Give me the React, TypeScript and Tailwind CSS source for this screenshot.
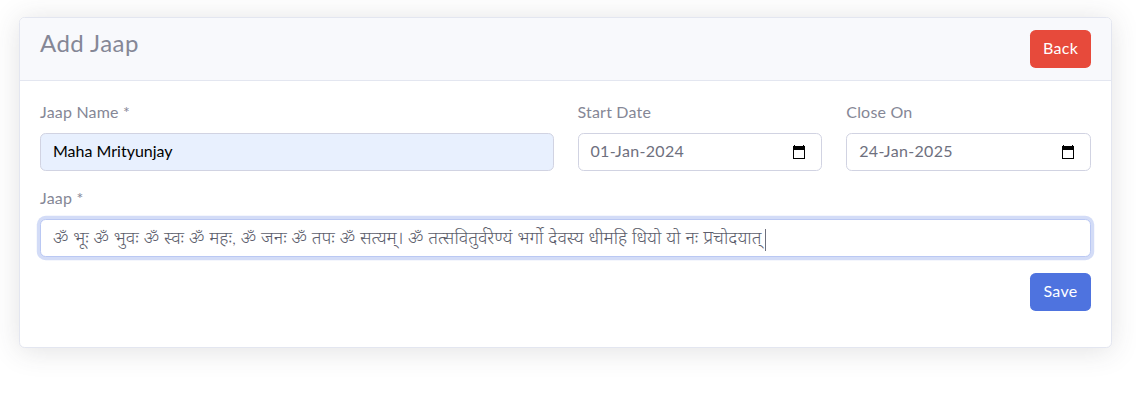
import type { ReactNode } from "react";

function CalendarIcon() {
  return (
    <svg width="14" height="15" viewBox="0 0 14 15" aria-hidden="true" shapeRendering="crispEdges">
      <path d="M2 0h1v1h8V0h1v1h1v13H1V1h1zM2 5v8h10V5z" fill="#000" fillRule="evenodd" />
    </svg>
  );
}

function Field({ label, className, children }: { label: string; className: string; children: ReactNode }) {
  return (
    <div className={className}>
      <div className="mb-2 h-6 text-[16px] leading-[22px] tracking-[0.2px] text-[#858796]">{label}</div>
      {children}
    </div>
  );
}

function DateField({ label, value }: { label: string; value: string }) {
  return (
    <Field label={label} className="w-[244.75px]">
      <div className="flex h-[38px] items-center justify-between rounded-[5.6px] border border-[#d1d3e2] bg-white pr-[15px] pl-3 text-[#6e707e]">
        <span className="pb-0.5 tracking-[0.33px]">{value}</span>
        <CalendarIcon />
      </div>
    </Field>
  );
}

export default function App() {
  return (
    <main className="h-[415px] overflow-hidden bg-white px-[19px] pt-[17px] font-['Lato','Noto_Sans',sans-serif] text-[16px] leading-6">
      <section className="h-[331px] w-[1093px] rounded-[5.6px] border border-[#e3e6f0] bg-white shadow-[0_2.4px_28px_0_rgba(58,59,69,0.15)]">
        <header className="flex h-[63px] items-start justify-between rounded-t-[4.6px] border-b border-[#e3e6f0] bg-[#f8f9fc] px-5 pt-3">
          <h1 className="text-[24px] leading-[26px] tracking-[0.45px] text-[#858796]">Add Jaap</h1>
          <button className="h-[38px] w-[61px] rounded-[5.6px] bg-[#e74a3b] pb-0.5 tracking-[0.3px] text-white">Back</button>
        </header>
        <form className="px-5 pt-5">
          <div className="flex gap-6">
            <Field label="Jaap Name *" className="w-[513.5px]">
              <div className="flex h-[38px] items-center rounded-[5.6px] border border-[#d1d3e2] bg-[#e8f0fe] px-3 text-black">
                <span className="pb-0.5">Maha Mrityunjay</span>
              </div>
            </Field>
            <DateField label="Start Date" value="01-Jan-2024" />
            <DateField label="Close On" value="24-Jan-2025" />
          </div>
          <Field label="Jaap *" className="mt-4">
            <div className="flex h-[38px] items-center rounded-[5.6px] border border-[#bac8f3] bg-white px-3 text-[#6e707e] shadow-[0_0_0_3.2px_rgba(78,115,223,0.25)]">
              <span className="pb-[3px] text-[18px] font-light whitespace-nowrap text-[#5c5e6c]">ॐ भूः ॐ भुवः ॐ स्वः ॐ महः, ॐ जनः ॐ तपः ॐ सत्यम्। ॐ तत्सवितुर्वरेण्यं भर्गो देवस्य धीमहि धियो यो नः प्रचोदयात्</span>
              <span className="mt-[3px] ml-[3.5px] h-[22px] w-px bg-[#6e707e]" />
            </div>
          </Field>
          <div className="mt-4 flex justify-end">
            <button type="button" className="h-[38px] w-[61px] rounded-[5.6px] bg-[#4e73df] pb-0.5 tracking-[0.3px] text-white">Save</button>
          </div>
        </form>
      </section>
    </main>
  );
}
